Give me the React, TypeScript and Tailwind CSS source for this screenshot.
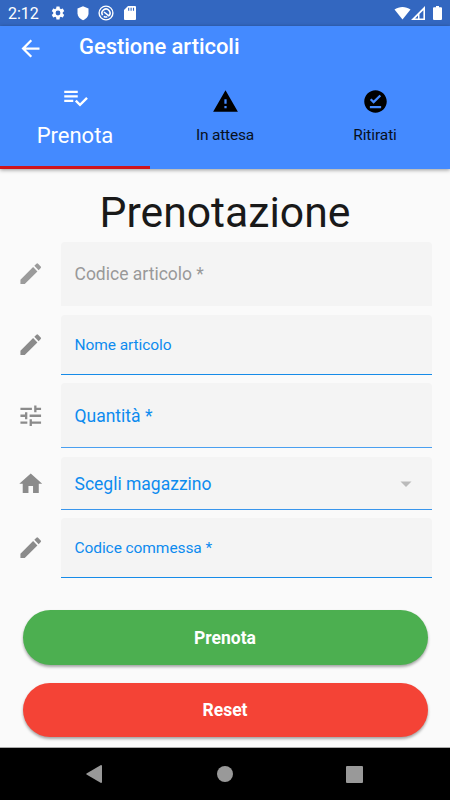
import type { ReactNode } from "react";

const PENCIL = "M3 17.25V21h3.75L17.81 9.94l-3.75-3.75L3 17.25zM20.71 7.04a1 1 0 0 0 0-1.41l-2.34-2.34a1 1 0 0 0-1.41 0l-1.83 1.83 3.75 3.75 1.83-1.83z";
const TUNE = "M3 17v2h6v-2H3zM3 5v2h10V5H3zm10 16v-2h8v-2h-8v-2h-2v6h2zM7 9v2H3v2h4v2h2V9H7zm14 4v-2H11v2h10zm-6-4h2V7h4V5h-4V3h-2v6z";
const HOME = "M10 20v-6h4v6h5v-8h3L12 3 2 12h3v8z";
const CHECKLIST = "M14 10H2v2h12v-2zm0-4H2v2h12V6zM2 16h8v-2H2v2zm19.5-4.5L23 13l-6.99 7-4.51-4.5L13 14l3.01 3 5.49-5.5z";
const WARNING = "M1 21h22L12 2 1 21zm12-3h-2v-2h2v2zm0-4h-2v-4h2v4z";
const OFFLINE_PIN = "M12 2C6.5 2 2 6.5 2 12s4.5 10 10 10 10-4.5 10-10S17.5 2 12 2zm5 16H7v-2h10v2zm-6.7-4L7 10.7l1.4-1.4 1.9 1.9 5.3-5.3L17 7.3 10.3 14z";
const GEAR = "M19.14 12.94c.04-.3.06-.61.06-.94 0-.32-.02-.64-.07-.94l2.03-1.58a.49.49 0 0 0 .12-.61l-1.92-3.32a.49.49 0 0 0-.59-.22l-2.39.96c-.5-.38-1.03-.7-1.62-.94l-.36-2.54a.48.48 0 0 0-.48-.41h-3.84c-.24 0-.43.17-.47.41l-.36 2.54c-.59.24-1.13.57-1.62.94l-2.39-.96a.48.48 0 0 0-.59.22L2.74 8.87c-.12.21-.08.47.12.61l2.03 1.58c-.05.3-.09.63-.09.94s.02.64.07.94l-2.03 1.58a.49.49 0 0 0-.12.61l1.92 3.32c.12.22.37.29.59.22l2.39-.96c.5.38 1.03.7 1.62.94l.36 2.54c.05.24.24.41.48.41h3.84c.24 0 .44-.17.47-.41l.36-2.54c.59-.24 1.13-.56 1.62-.94l2.39.96c.22.08.47 0 .59-.22l1.92-3.32a.49.49 0 0 0-.12-.61l-2.01-1.58zM12 15.6A3.6 3.6 0 1 1 12 8.4a3.6 3.6 0 0 1 0 7.2z";

function Icon({ d, className }: { d: string; className: string }) {
  return (
    <svg viewBox="0 0 24 24" fill="currentColor" className={className}>
      <path d={d} />
    </svg>
  );
}

function StatusBar() {
  return (
    <div className="flex h-[26px] items-center bg-[#3367c0] pl-[8px] text-white">
      <span className="w-[42px] pt-0.5 text-[16px] leading-6">2:12</span>
      <Icon d={GEAR} className="size-4 shrink-0" />
      <svg viewBox="0 0 12 15" className="ml-[11px] h-[15px] w-3 shrink-0" fill="currentColor">
        <path d="M6 .3 11.5 2.5v4.8c0 3.2-2.3 5.8-5.5 7C2.8 13.1.5 10.5.5 7.3V2.5z" />
      </svg>
      <svg viewBox="0 0 16 16" className="ml-[9px] size-4 shrink-0" fill="none" stroke="currentColor">
        <circle cx="8" cy="8" r="6.9" strokeWidth="1.4" />
        <path d="M4.6 10.2A4 4 0 1 1 10.800 10.900" strokeWidth="1.6" />
        <path d="M5.800 11.300A4 4 0 0 0 9.300 11.800M6 7l5.200 4.200" strokeWidth="1.6" />
      </svg>
      <svg viewBox="0 0 12 14" className="ml-[10px] h-3.5 w-3 shrink-0">
        <path fill="currentColor" d="M4 0h7a1 1 0 0 1 1 1v12a1 1 0 0 1-1 1H1a1 1 0 0 1-1-1V4z" />
        <path stroke="#3367c0" strokeWidth="1.1" d="M4.7 1.7v3M7.1 1.7v3M9.5 1.7v3" />
      </svg>
      <svg viewBox="0 0 17 14" className="ml-auto h-3.5 w-[17px]" fill="currentColor">
        <path d="M.5 3.5C5 .1 12 .1 16.5 3.5L8.5 13.5z" />
      </svg>
      <svg viewBox="0 0 14 14" className="h-3.5 w-3.5">
        <path fill="currentColor" fillRule="evenodd" d="M14 0v14H0zM12.4 4.2 8.5 8.1v4.4h3.9zM7 9.6 4.1 12.5H7z" />
      </svg>
      <svg viewBox="0 0 9 14" className="ml-[8px] mr-2 h-3.5 w-[9px]" fill="currentColor">
        <path d="M3 0h3v1.3h2a1 1 0 0 1 1 1V13a1 1 0 0 1-1 1H1a1 1 0 0 1-1-1V2.3a1 1 0 0 1 1-1h2z" />
      </svg>
    </div>
  );
}

function Header() {
  return (
    <header className="flex h-[143px] flex-col bg-[#448aff] shadow-[0_1px_4px_rgba(0,0,0,0.4)]">
      <div className="flex h-11 items-center text-white">
        <Icon
          d="M20 11H7.83l5.59-5.59L12 4l-8 8 8 8 1.41-1.41L7.83 13H20v-2z"
          className="ml-[17px] size-[27px] shrink-0"
        />
        <h1 className="ml-[35px] pb-0.5 text-[22px] leading-7 font-medium tracking-[-0.05px]">Gestione articoli</h1>
      </div>
      <nav className="grid flex-1 grid-cols-3">
        <div className="flex flex-col items-center border-b-[3px] border-[#d0151c] pt-3.5 text-white">
          <Icon d={CHECKLIST} className="size-[27px]" />
          <span className="mt-[11px] text-[22px] leading-7">Prenota</span>
        </div>
        <div className="flex flex-col items-center pt-[18px] text-[#08101d]">
          <Icon d={WARNING} className="size-[27px] text-black" />
          <span className="mt-[10px] text-[15.5px] leading-5 tracking-[-0.2px]">In attesa</span>
        </div>
        <div className="flex flex-col items-center pt-[18px] text-[#08101d]">
          <Icon d={OFFLINE_PIN} className="size-[27px] text-black" />
          <span className="mt-[10px] text-[15.5px] leading-5 tracking-[-0.1px]">Ritirati</span>
        </div>
      </nav>
    </header>
  );
}

function Field({ icon, iconClass = "text-[#8b8b8b]", box, children }: { icon: string; iconClass?: string; box: string; children: ReactNode }) {
  return (
    <div className="flex items-center">
      <div className="flex w-[61px] shrink-0 justify-center">
        <Icon d={icon} className={`size-[27.5px] ${iconClass}`} />
      </div>
      <div className={`mr-[17.6px] flex flex-1 items-center rounded-t-[4px] bg-[#f4f4f4] pt-px pr-5 pl-[13.5px] ${box}`}>{children}</div>
    </div>
  );
}

export default function App() {
  return (
    <div className="flex h-[800px] w-[450px] flex-col overflow-hidden bg-[#fafafa] font-['Roboto',sans-serif]">
      <StatusBar />
      <Header />
      <main className="flex flex-1 flex-col">
        <h2 className="mt-[18px] h-[55px] text-center text-[42.7px] leading-[51px] text-[#191919]">Prenotazione</h2>
        <div className="flex flex-col text-[#0d8bef]">
          <Field icon={PENCIL} iconClass="text-[#9b9b9b]" box="h-16">
            <span className="text-[17.5px] text-[#999]">Codice articolo *</span>
          </Field>
          <div className="mt-[9px]">
            <Field icon={PENCIL} box="h-[60px] border-b border-b-[#168be8]">
              <span className="pt-px text-[15.5px] tracking-[-0.08px]">Nome articolo</span>
            </Field>
          </div>
          <div className="mt-[8px]">
            <Field icon={TUNE} box="h-[65px] border-b border-b-[#4a9ff0]">
              <span className="pt-px text-[17.5px]">Quantità *</span>
            </Field>
          </div>
          <div className="mt-[9px]">
            <Field icon={HOME} box="h-[53px] border-b border-b-[#3895ec]">
              <span className="pt-px text-[17.5px]">Scegli magazzino</span>
              <svg viewBox="0 0 12 6" className="ml-auto h-1.5 w-3" fill="#bababa">
                <path d="M.5.5h11L6 6z" />
              </svg>
            </Field>
          </div>
          <div className="mt-[8px]">
            <Field icon={PENCIL} box="h-[60px] border-b border-b-[#168be8]">
              <span className="pt-px text-[15.5px] tracking-[-0.08px]">Codice commessa *</span>
            </Field>
          </div>
        </div>
        <div className="mt-[32px] flex flex-col gap-[18px] px-[22.5px] text-[17.5px] font-bold text-white">
          <button className="h-[55px] rounded-full bg-[#4caf50] pt-0.5 shadow-[0_2px_3px_rgba(0,0,0,0.35)]">Prenota</button>
          <button className="h-[54px] rounded-full bg-[#f44336] shadow-[0_2px_3px_rgba(0,0,0,0.35)]">Reset</button>
        </div>
      </main>
      <footer className="flex h-[53px] items-center border-t border-[#aaa] bg-black text-[#999]">
        <svg viewBox="0 0 16 18" className="ml-[86px] h-[18px] w-4" fill="currentColor">
          <path d="M15 0Q16 0 16 1v16q0 1-1 1L.5 9.5Q0 9 .5 8.5z" />
        </svg>
        <div className="ml-[115px] size-4 rounded-full bg-[#999]" />
        <div className="ml-[113px] size-[17px] rounded-[1px] bg-[#999]" />
      </footer>
    </div>
  );
}
